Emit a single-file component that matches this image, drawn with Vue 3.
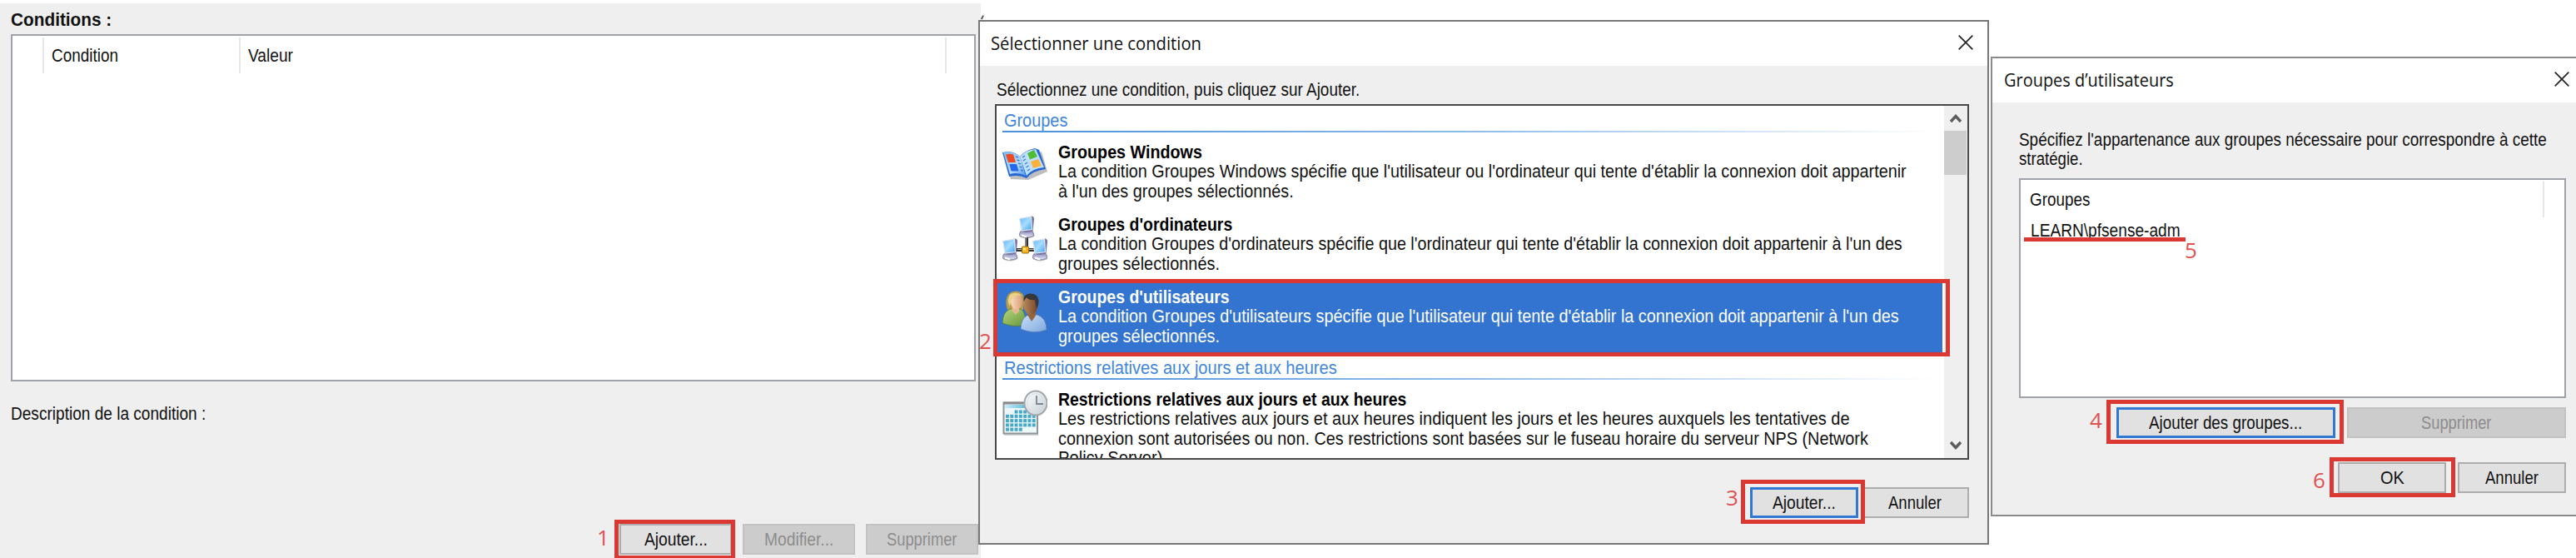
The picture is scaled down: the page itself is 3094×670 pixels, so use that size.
<script setup>
// Squeezes a line of text to the given width in px
const vFit = {
  mounted(el, { value }) {
    const natural = el.offsetWidth
    el.style.transform = `scaleX(${value / natural})`
    el.style.marginRight = `${value - natural}px`
  },
}

const sections = [
  {
    title: 'Groupes',
    width: 76,
    items: [
      {
        icon: 'book',
        title: 'Groupes Windows',
        width: 173,
        lines: [
          ["La condition Groupes Windows spécifie que l'utilisateur ou l'ordinateur qui tente d'établir la connexion doit appartenir", 1019],
          ["à l'un des groupes sélectionnés.", 283],
        ],
      },
      {
        icon: 'network',
        title: "Groupes d'ordinateurs",
        width: 209,
        lines: [
          ["La condition Groupes d'ordinateurs spécifie que l'ordinateur qui tente d'établir la connexion doit appartenir à l'un des", 1014],
          ['groupes sélectionnés.', 194],
        ],
      },
      {
        icon: 'users',
        title: "Groupes d'utilisateurs",
        width: 206,
        selected: true,
        lines: [
          ["La condition Groupes d'utilisateurs spécifie que l'utilisateur qui tente d'établir la connexion doit appartenir à l'un des", 1010],
          ['groupes sélectionnés.', 194],
        ],
      },
    ],
  },
  {
    title: 'Restrictions relatives aux jours et aux heures',
    width: 400,
    items: [
      {
        icon: 'calendar',
        title: 'Restrictions relatives aux jours et aux heures',
        width: 418,
        lines: [
          ['Les restrictions relatives aux jours et aux heures indiquent les jours et les heures auxquels les tentatives de', 951],
          ['connexion sont autorisées ou non. Ces restrictions sont basées sur le fuseau horaire du serveur NPS (Network', 973],
          ['Policy Server).', 131],
        ],
      },
    ],
  },
]

// Red marks drawn over the windows
const frames = [
  { x: 737.5, y: 623.5, w: 145.5, h: 48 },
  { x: 1192.5, y: 335, w: 1149, h: 93 },
  { x: 2091, y: 575.5, w: 149, h: 53.5 },
  { x: 2529.5, y: 479.5, w: 285.5, h: 53.5 },
  { x: 2797.5, y: 548.5, w: 151.5, h: 48.5 },
]

const steps = [
  { n: 1, x: 717, y: 632 },
  { n: 2, x: 1176, y: 396 },
  { n: 3, x: 2073, y: 584 },
  { n: 4, x: 2510, y: 491 },
  { n: 5, x: 2624, y: 287 },
  { n: 6, x: 2778, y: 563 },
]

const monitors = [
  [20, 1],
  [0, 28],
  [36, 28],
]

const days = []
for (let r = 0; r < 5; r++) {
  for (let c = 0; c < 7; c++) {
    if ((r === 0 && c < 2) || (r === 4 && c > 3)) continue
    days.push([4 + c * 5.3, 24.5 + r * 5.3])
  }
}
</script>

<template>
  <div class="board">
    <section class="panel conditions">
      <div class="label"><b v-fit="121">Conditions :</b></div>
      <div class="listview">
        <div class="columns">
          <div class="col col-icon"></div>
          <div class="col col-name"><span v-fit="80">Condition</span></div>
          <div class="col col-value"><span v-fit="54">Valeur</span></div>
        </div>
      </div>
      <div class="description"><span v-fit="234">Description de la condition :</span></div>
      <div class="actions">
        <button class="btn"><span v-fit="76">Ajouter...</span></button>
        <button class="btn" disabled><span v-fit="83">Modifier...</span></button>
        <button class="btn" disabled><span v-fit="84">Supprimer</span></button>
      </div>
    </section>

    <span class="tick"></span>

    <section class="panel dialog select">
      <header class="titlebar">
        <span v-fit="253">Sélectionner une condition</span>
        <svg class="close" viewBox="0 0 18 18"><path d="M.7.7l16.6 16.6M17.3.7L.7 17.3" /></svg>
      </header>
      <div class="body">
        <p class="hint"><span v-fit="436">Sélectionnez une condition, puis cliquez sur Ajouter.</span></p>
        <div class="chooser">
          <div class="entries">
            <template v-for="section in sections" :key="section.title">
              <div class="section-title"><span v-fit="section.width">{{ section.title }}</span></div>
              <div v-for="item in section.items" :key="item.title" class="entry" :class="{ selected: item.selected }">
                <svg v-if="item.icon === 'book'" class="icon" viewBox="0 0 54 58">
                  <defs>
                    <linearGradient id="page" x1="0" y1="0" x2="1" y2="1">
                      <stop offset="0" stop-color="#7db8f4" />
                      <stop offset=".6" stop-color="#b9dcf9" />
                      <stop offset="1" stop-color="#4e93e6" />
                    </linearGradient>
                  </defs>
                  <g transform="translate(0 6)">
                    <path d="M2 9L10 38L31 39L54 29L47 5L24 13Z" fill="#444" opacity=".35" />
                    <path d="M0 6L8 35Q20 32 29 37Q36 28 52 26L44 3L39 1Q26 4 21 11Q13 3 0 6Z" fill="#2468d4" />
                    <path d="M1 6Q13 4 21 11L28 34Q18 29 9 32Z" fill="url(#page)" />
                    <path d="M21 11Q28 3 40 2L50 24Q36 25 29 34Z" fill="#bce0fb" />
                    <path d="M4 8.5Q9 7 13 8.5L16 18H7Z" fill="#ee4c20" />
                    <path d="M8.5 20H17L19.500 28.5H10.500Z" fill="#2368ed" />
                    <path d="M30 7L38 3L42 11L33 14.500Z" fill="#4ebd35" />
                    <path d="M34 17L43 14L47 22L37 25Z" fill="#fbb13a" />
                    <path d="M16 11l3 1M17.500 15l3 1M19 19l3 1M20.500 23l3 1M22 27l3 1M24 12l3-2M25 16l3-2M27 20l3-2M28.500 24l3-2M30 28l3-2" stroke="#3e7fd6" stroke-width="1.500" />
                  </g>
                </svg>
                <svg v-else-if="item.icon === 'network'" class="icon" viewBox="0 0 54 58">
                  <defs>
                    <linearGradient id="screen" x1="0" y1="0" x2="1" y2="1">
                      <stop offset="0" stop-color="#5fb4f8" />
                      <stop offset=".5" stop-color="#a5ddff" />
                      <stop offset="1" stop-color="#3d9df0" />
                    </linearGradient>
                    <linearGradient id="base" x1="0" y1="0" x2="0" y2="1">
                      <stop offset="0" stop-color="#8582b8" />
                      <stop offset="1" stop-color="#e8e8f6" />
                    </linearGradient>
                  </defs>
                  <path d="M29 25V42M16 42H40" stroke="#333" stroke-width="4" />
                  <path d="M28 27V40M18 41.500H39" stroke="#b8b8b8" stroke-width="1.200" />
                  <rect x="23.500" y="38" width="8" height="8" rx="1" fill="#f5b420" stroke="#9c6d08" />
                  <rect x="25" y="39.500" width="3" height="3" fill="#ffe57a" />
                  <g v-for="([x, y], i) in monitors" :key="i" :transform="`translate(${x} ${y})`">
                    <path d="M3 18.500H15Q19 21 18.500 25Q10 29.500 1 25.500Q0 21 3 18.500Z" fill="#555" opacity=".4" />
                    <path d="M3 17.500H15Q18 20 17.500 24Q9 28 .5 24Q0 20 3 17.500Z" fill="url(#base)" stroke="#74749b" stroke-width=".8" />
                    <path d="M.8 3.500L15.500 .5Q18 1 18 4L16.500 18.500Q9 21 3.500 19Z" fill="#75759f" />
                    <path d="M.5 3.500L14.500 1L15.500 16.500L3 18Z" fill="url(#screen)" stroke="#dfe7f5" stroke-width="1.200" />
                    <path d="M3 23.500l6 2" stroke="#fff" stroke-width="2" />
                  </g>
                </svg>
                <svg v-else-if="item.icon === 'users'" class="icon" viewBox="0 0 54 58">
                  <defs>
                    <linearGradient id="green" x1="0" y1="0" x2="1" y2="1">
                      <stop offset="0" stop-color="#b6d67e" />
                      <stop offset="1" stop-color="#66963a" />
                    </linearGradient>
                    <linearGradient id="shirt" x1="0" y1="0" x2="1" y2="1">
                      <stop offset="0" stop-color="#c9e0fa" />
                      <stop offset="1" stop-color="#7da6dc" />
                    </linearGradient>
                    <linearGradient id="skin" x1="0" y1="0" x2="1" y2="0">
                      <stop offset="0" stop-color="#fbdcc0" />
                      <stop offset="1" stop-color="#d79d75" />
                    </linearGradient>
                    <linearGradient id="skin2" x1="0" y1="0" x2="1" y2="0">
                      <stop offset="0" stop-color="#bb8659" />
                      <stop offset="1" stop-color="#70452a" />
                    </linearGradient>
                  </defs>
                  <g transform="translate(0 4)">
                    <path d="M5 9Q7 .5 17 .5Q26 1 26 12L25 23L7 24Q3 18 5 9Z" fill="#b99d4a" />
                    <path d="M0 39Q0 26 9 22L22 22Q28 25 28 41Q14 45 0 39Z" fill="url(#green)" stroke="#50793a" stroke-width=".8" />
                    <path d="M12 19H20V25L15.500 29L11 24Z" fill="#e2b78f" />
                    <ellipse cx="17" cy="13" rx="7" ry="9.500" fill="url(#skin)" />
                    <path d="M9 19Q4 10 10 4Q17 0 24 6Q15 4 11 10Z" fill="#e8d389" />
                    <path d="M22 46Q22 33 31 29H42Q53 33 53 47Q38 53 22 46Z" fill="url(#shirt)" stroke="#537fb9" stroke-width=".8" />
                    <path d="M30 25H40V30L35 37L30 29Z" fill="#95643e" />
                    <ellipse cx="34" cy="17" rx="8.500" ry="12" fill="url(#skin2)" />
                    <path d="M25.500 13Q24 5 32 3.500Q43 3 43.500 12Q43.500 18 41 21L39 11Q32 12 29 8Z" fill="#37373a" />
                  </g>
                </svg>
                <svg v-else class="icon calendar" viewBox="0 0 54 58">
                  <defs>
                    <linearGradient id="strip" x1="0" y1="0" x2="1" y2="0">
                      <stop offset="0" stop-color="#c9eefa" />
                      <stop offset="1" stop-color="#2d9cc6" />
                    </linearGradient>
                    <linearGradient id="dial" x1="0" y1="0" x2="1" y2="1">
                      <stop offset="0" stop-color="#ffffff" />
                      <stop offset="1" stop-color="#c3ccd3" />
                    </linearGradient>
                  </defs>
                  <rect x="2" y="17" width="41" height="38" fill="#999" opacity=".4" />
                  <rect x="1.500" y="15.500" width="40.500" height="37" fill="#edf6f9" stroke="#8f9699" stroke-width="2" />
                  <rect x="1" y="14.500" width="41" height="3" fill="#8b8b8b" />
                  <rect x="3" y="18" width="38" height="4" fill="url(#strip)" />
                  <rect v-for="([x, y], i) in days" :key="i" :x="x" :y="y" width="3.900" height="4" fill="#46a9ca" />
                  <ellipse cx="40" cy="16" rx="13.500" ry="14.500" fill="url(#dial)" stroke="#a1a8ad" stroke-width="2" />
                  <ellipse cx="40" cy="16" rx="10.500" ry="11.500" fill="none" stroke="#d7dde1" />
                  <path d="M41 7V17H49" fill="none" stroke="#7a858c" stroke-width="1.800" />
                </svg>
                <div class="entry-text">
                  <div class="line"><b v-fit="item.width">{{ item.title }}</b></div>
                  <div v-for="[text, width] in item.lines" :key="text" class="line">
                    <span v-fit="width">{{ text }}</span>
                  </div>
                </div>
              </div>
            </template>
          </div>
          <div class="scrollbar">
            <svg viewBox="0 0 14 12"><path d="M1 10L7 3.500L13 10" /></svg>
            <div class="thumb"></div>
            <svg class="down" viewBox="0 0 14 12"><path d="M1 2L7 8.500L13 2" /></svg>
          </div>
        </div>
        <div class="actions">
          <button class="btn default"><span v-fit="76">Ajouter...</span></button>
          <button class="btn"><span v-fit="64">Annuler</span></button>
        </div>
      </div>
    </section>

    <section class="panel dialog users">
      <header class="titlebar">
        <span v-fit="204">Groupes d’utilisateurs</span>
        <svg class="close" viewBox="0 0 18 18"><path d="M.7.7l16.6 16.6M17.3.7L.7 17.3" /></svg>
      </header>
      <div class="body">
        <p class="hint">
          <span v-fit="634">Spécifiez l'appartenance aux groupes nécessaire pour correspondre à cette</span><br />
          <span v-fit="77">stratégie.</span>
        </p>
        <div class="listview">
          <div class="columns">
            <div class="col col-group"><span v-fit="72">Groupes</span></div>
          </div>
          <div class="row"><span v-fit="180">LEARN\pfsense-adm</span></div>
        </div>
        <div class="actions wide">
          <button class="btn default"><span v-fit="184">Ajouter des groupes...</span></button>
          <button class="btn" disabled><span v-fit="84">Supprimer</span></button>
        </div>
        <div class="actions">
          <button class="btn"><span v-fit="29">OK</span></button>
          <button class="btn"><span v-fit="64">Annuler</span></button>
        </div>
      </div>
    </section>

    <div
      v-for="(f, i) in frames"
      :key="'f' + i"
      class="frame"
      :style="{ left: f.x + 'px', top: f.y + 'px', width: f.w + 'px', height: f.h + 'px' }"
    ></div>
    <div class="underline"></div>
    <span v-for="s in steps" :key="s.n" class="step" :style="{ left: s.x + 'px', top: s.y + 'px' }">{{ s.n }}</span>
  </div>
</template>

<style>
body {
  margin: 0;
  background: #fff;
}
</style>

<style scoped>
.board {
  position: relative;
  width: 3094px;
  height: 670px;
  overflow: hidden;
  background: #fff;
  font-family: 'Liberation Sans', Arial, sans-serif;
  font-size: 22px;
  line-height: 24px;
  color: #111;
}
.board * {
  box-sizing: border-box;
}
.board span,
.board b {
  display: inline-block;
  white-space: nowrap;
  transform-origin: left center;
}
.panel {
  position: absolute;
  display: flex;
  flex-direction: column;
  background: #efefef;
}
.listview {
  background: #fff;
  border: 2px solid #a0a2a9;
}
.columns {
  display: flex;
  height: 43px;
  margin-top: 2px;
}
.col {
  display: flex;
  align-items: center;
  padding-left: 9px;
  border-right: 2px solid #e6e6e6;
}
.actions {
  display: flex;
  justify-content: flex-end;
}
.btn {
  display: flex;
  align-items: center;
  justify-content: center;
  height: 37px;
  padding: 0;
  border: 2px solid #adadad;
  background: #e1e1e1;
  font: inherit;
  color: #111;
}
.btn.default {
  border: 3px solid #3078d2;
}
.btn:disabled {
  background: #ccc;
  border-color: #c2c2c2;
  color: #8c8c8c;
}

/* Conditions list */
.conditions {
  left: 0;
  top: 4px;
  width: 1178px;
  height: 666px;
  padding: 8px 3px 4px 13px;
}
.conditions .listview {
  width: 1159px;
  height: 417px;
  margin-top: 5px;
}
.col-icon {
  width: 38px;
}
.col-name {
  width: 236px;
}
.col-value {
  width: 848px;
}
.description {
  margin-top: 27px;
}
.conditions .actions {
  margin-top: auto;
  gap: 13px;
}
.conditions .btn {
  width: 135px;
}
.tick {
  position: absolute;
  left: 1179px;
  top: 18px;
  width: 2px;
  height: 5px;
  background: #555;
  transform: rotate(25deg);
}

/* Dialogs */
.titlebar {
  display: flex;
  align-items: center;
  justify-content: space-between;
  height: 53px;
  padding-bottom: 3px;
  background: #fff;
  font-family: 'Open Sans', sans-serif;
}
.close {
  width: 18px;
  height: 18px;
  fill: none;
  stroke: #222;
  stroke-width: 1.7;
}
.hint {
  margin: 0;
}
.select {
  left: 1175px;
  top: 24px;
  width: 1214px;
  height: 630px;
  border: 2px solid #777;
}
.select .titlebar {
  padding-left: 13px;
  padding-right: 17px;
}
.select .body {
  padding: 17px 22px 0 18px;
}
.select .hint {
  padding-left: 2px;
}
.chooser {
  display: flex;
  height: 427px;
  margin-top: 5px;
  border: 2px solid #484848;
  background: #fff;
  overflow: hidden;
}
.entries {
  flex: 1;
  padding-top: 3px;
  overflow: hidden;
}
.section-title {
  height: 36px;
  padding: 3px 0 0 9px;
  color: #3f86dc;
  background: linear-gradient(90deg, #4a90dc, #8fbce9 50%, #fff) 7px 27px / 1120px 2px no-repeat;
}
.entry {
  display: flex;
  gap: 13px;
  height: 87px;
  padding: 5px 0 0 7px;
  margin-right: 2px;
}
.entry.selected {
  background: #3374d0;
  color: #fff;
}
.icon {
  flex: none;
  width: 54px;
  height: 58px;
}
.line {
  height: 23.3px;
  line-height: 23.3px;
}
.entry b {
  color: #000;
}
.entry.selected b {
  color: #fff;
}
.scrollbar {
  display: flex;
  flex-direction: column;
  align-items: center;
  width: 28px;
  padding: 9px 1px 9px 0;
  background: #efefef;
}
.scrollbar svg {
  width: 14px;
  height: 12px;
  fill: none;
  stroke: #5c5c5c;
  stroke-width: 3.4;
}
.thumb {
  width: 27px;
  height: 53px;
  margin-top: 9px;
  background: #cdcdcd;
}
.scrollbar .down {
  margin-top: auto;
}
.select .actions {
  margin-top: 33px;
  gap: 3px;
}
.select .btn {
  width: 130px;
}
.users {
  left: 2391px;
  top: 68px;
  width: 703px;
  height: 552px;
  border: 2px solid #8a8a8a;
  border-right: 0;
}
.users .titlebar {
  padding-left: 14px;
  padding-right: 8px;
}
.users .body {
  padding: 33px 12px 0 32px;
}
.users .hint {
  line-height: 23px;
}
.users .listview {
  height: 264px;
  margin-top: 12px;
}
.col-group {
  width: 629px;
  padding-left: 11px;
}
.row {
  padding: 4px 0 0 12px;
}
.users .actions {
  gap: 14px;
  margin-top: 29px;
}
.users .actions.wide {
  margin-top: 11px;
}
.users .btn {
  width: 130px;
}
.users .wide .btn {
  width: 263px;
}

/* Tutorial marks */
.frame {
  position: absolute;
  border: 5px solid #db3833;
}
.underline {
  position: absolute;
  left: 2431px;
  top: 285px;
  width: 194px;
  height: 5px;
  background: #db3833;
}
.step {
  position: absolute;
  font-family: 'Open Sans', sans-serif;
  font-size: 26px;
  line-height: 26px;
  color: #e05252;
}
</style>
